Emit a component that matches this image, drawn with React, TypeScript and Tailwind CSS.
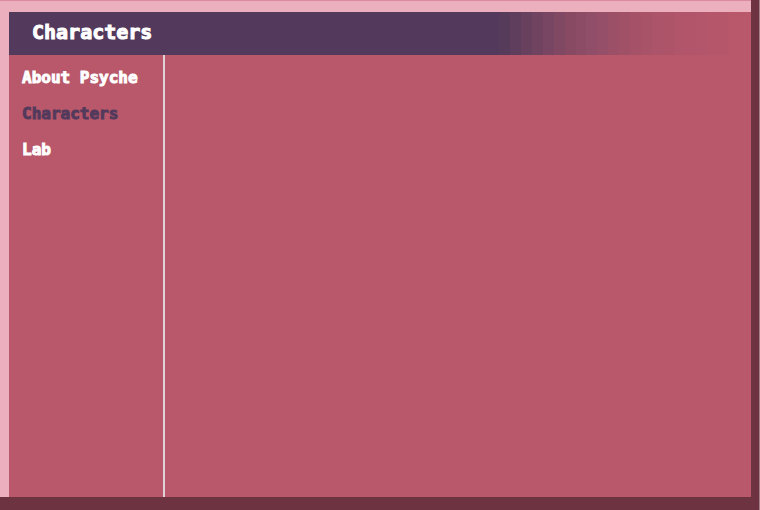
import React from "react";

const fadeBands: string[] = [
  "bg-[#563b5b]",
  "bg-[#5e3e5c]",
  "bg-[#68415e]",
  "bg-[#704460]",
  "bg-[#784662]",
  "bg-[#804862]",
  "bg-[#874a62]",
  "bg-[#8c4c65]",
  "bg-[#914e68]",
  "bg-[#964f69]",
  "bg-[#9b5068]",
  "bg-[#a05168]",
  "bg-[#a55268]",
  "bg-[#a95368]",
  "bg-[#ac5469]",
  "bg-[#ae5469]",
  "bg-[#b0556a]",
  "bg-[#b2556b]",
  "bg-[#b3566b]",
  "bg-[#b5566b]",
  "bg-[#b6566b]",
  "bg-[#b8586a]",
  "bg-[#b8586a]",
];

const pages: string[] = ["About Psyche", "Characters", "Lab"];

export default function App() {
  const current = "Characters";

  return (
    <div className="flex min-h-screen w-full border-r border-[#a77f8b] bg-[#6d3340] font-['DejaVu_Sans_Mono',monospace] font-bold text-white [-webkit-text-stroke:1px]">
      <div className="flex min-w-0 flex-1 flex-col">
        <div className="h-px bg-[#d98a9e]" />
        <div className="flex flex-1 flex-col border-t-[11px] border-l-[9px] border-[#ecafbd] bg-[#b8586a]">
          <header className="flex h-[43px]">
            <div className="flex w-[66%] bg-[#533a5c] pt-2 pl-[23px]">
              <h1 className="text-xl leading-6">Characters</h1>
            </div>
            <div className="flex flex-1" aria-hidden="true">
              {fadeBands.map((color, i) => (
                <span key={i} className={`flex-1 ${color}`} />
              ))}
            </div>
          </header>
          <div className="flex flex-1">
            <nav className="w-[156px] shrink-0 border-r-2 border-[#dfd3d8] pt-[11px] pl-[13px]">
              <ul className="flex flex-col gap-3">
                {pages.map((page) => (
                  <li key={page} className="h-6">
                    <a
                      href="#"
                      aria-current={page === current ? "page" : undefined}
                      className={`text-base leading-6 whitespace-nowrap ${
                        page === current ? "text-[#533a5c]" : "text-white"
                      }`}
                    >
                      {page}
                    </a>
                  </li>
                ))}
              </ul>
            </nav>
            <main className="flex-1" />
          </div>
        </div>
        <div className="h-[13px] bg-[#6d3340]" />
      </div>
      <div className="w-2 shrink-0 bg-[#6d3340]" />
    </div>
  );
}
